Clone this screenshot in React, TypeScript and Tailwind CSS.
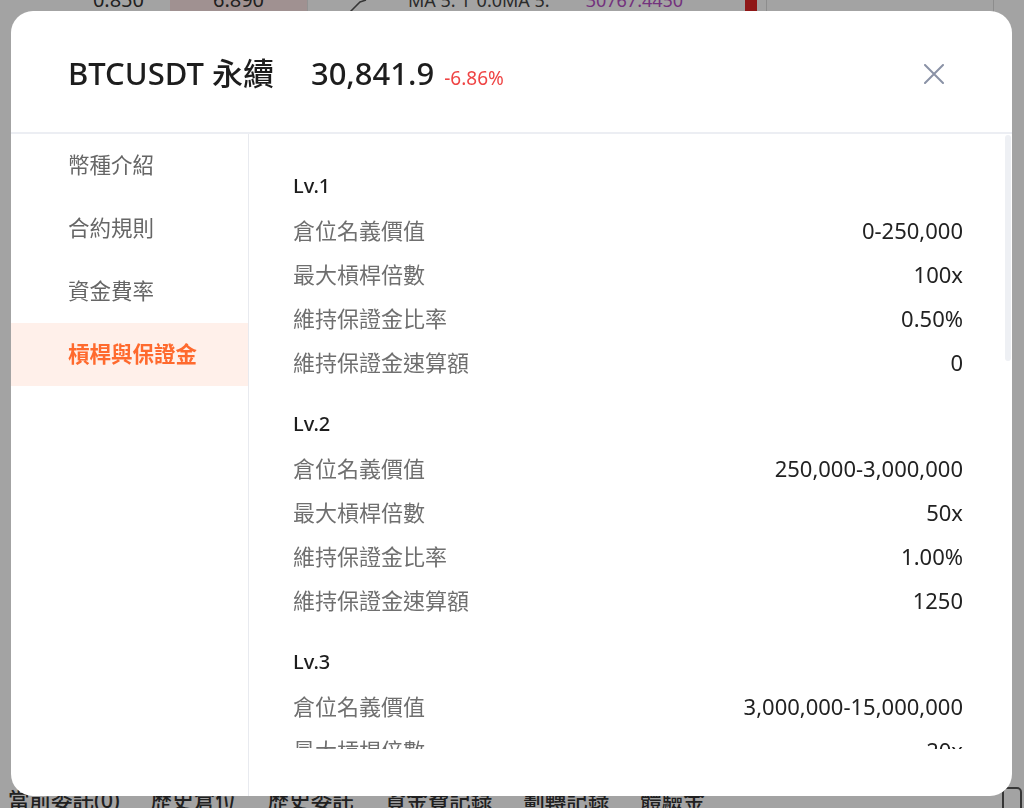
import React from "react";

const font = "font-['Noto_Sans','Noto_Sans_CJK_TC',sans-serif]";

const sections = [
  {
    lv: "Lv.1",
    rows: [
      ["倉位名義價值", "0-250,000"],
      ["最大槓桿倍數", "100x"],
      ["維持保證金比率", "0.50%"],
      ["維持保證金速算額", "0"],
    ],
  },
  {
    lv: "Lv.2",
    rows: [
      ["倉位名義價值", "250,000-3,000,000"],
      ["最大槓桿倍數", "50x"],
      ["維持保證金比率", "1.00%"],
      ["維持保證金速算額", "1250"],
    ],
  },
  {
    lv: "Lv.3",
    rows: [
      ["倉位名義價值", "3,000,000-15,000,000"],
      ["最大槓桿倍數", "20x"],
      ["維持保證金比率", "2.50%"],
      ["維持保證金速算額", "76250"],
    ],
  },
];

const menu = ["幣種介紹", "合約規則", "資金費率", "槓桿與保證金"];

export default function App() {
  return (
    <div className={`${font} relative h-[808px] w-full overflow-hidden bg-white`}>
      {/* background page */}
      <div className="flex h-[808px] flex-col justify-between">
        <div className="-mt-[14px] flex h-[28px] items-stretch text-[20px] text-[#333]">
          <div className="flex w-[170px] items-center justify-end pr-[26px]">0.850</div>
          <div className="flex w-[137px] items-center justify-center bg-[#fbe3e3]">6.890</div>
          <div className="w-[1px] bg-[#e5e5e5]" />
          <div className="flex w-[100px] items-center">
            <svg width="60" height="28" viewBox="0 0 60 28">
              <path d="M40 28 L52 16 L58 14" stroke="#555" strokeWidth="1.5" fill="none" />
            </svg>
          </div>
          <div className="flex items-center gap-[6px] text-[18px]">
            <span className="text-[#444]">MA 5: 1</span>
            <span className="text-[#444]">0.0MA 5:</span>
            <span className="ml-[30px] text-[#b54fc4]">30767.4450</span>
          </div>
          <div className="ml-[62px] w-[12px] bg-[#e02424]" />
          <div className="ml-[9px] w-[1px] bg-[#ddd]" />
          <div className="flex-1" />
          <div className="w-[1px] bg-[#ddd]" />
          <div className="w-[30px]" />
        </div>
        <div className="-mb-[8px] flex h-[32px] items-center gap-[31px] pl-[8px] text-[21.5px] font-medium text-[#333]">
          <span>當前委託(0)</span>
          <span>歷史倉位</span>
          <span>歷史委託</span>
          <span>資金費記錄</span>
          <span>劃轉記錄</span>
          <span>體驗金</span>
          <span className="ml-auto mr-[2px] h-[26px] w-[20px] rounded-[5px] border-2 border-[#555]" />
        </div>
      </div>

      {/* dim overlay */}
      <div className="fixed inset-0 bg-black/[0.36]" />

      {/* modal */}
      <div className="fixed left-[11px] top-[11px] flex h-[785px] w-[1001px] flex-col overflow-hidden rounded-[22px] bg-white">
        <div className="flex h-[123px] shrink-0 items-center border-b-2 border-[#eceef3] pl-[57px] pr-[66px] pt-[4px]">
          <div className="flex items-baseline">
            <span className="text-[31px] font-medium text-[#1d1d1d]">BTCUSDT 永續</span>
            <span className="ml-[37px] text-[31px] font-medium text-[#1d1d1d]">30,841.9</span>
            <span className="ml-[10px] text-[19px] text-[#ef4444]">-6.86%</span>
          </div>
          <button className="ml-auto flex h-[24px] w-[24px] items-center justify-center">
            <svg width="20" height="20" viewBox="0 0 20 20">
              <path d="M1 1 L19 19 M19 1 L1 19" stroke="#8a92a6" strokeWidth="2" strokeLinecap="round" />
            </svg>
          </button>
        </div>

        <div className="flex min-h-0 flex-1">
          <div className="w-[238px] shrink-0 border-r border-[#e8eaef]">
            {menu.map((m, i) => {
              const active = i === 3;
              return (
                <div
                  key={m}
                  className={`flex h-[63px] items-center pl-[57px] text-[21.5px] ${
                    active ? "bg-[#fff0ea] font-bold text-[#ff6a2e]" : "text-[#666]"
                  }`}
                >
                  {m}
                </div>
              );
            })}
          </div>

          <div className="flex min-w-0 flex-1 flex-col pb-[47px]">
            <div className="min-h-0 flex-1 overflow-hidden pl-[44px] pr-[42px] pt-[30px]">
              {sections.map((s) => (
                <div key={s.lv} className="mb-[18px]">
                  <div className="flex h-[44px] items-center text-[20px] font-medium text-[#1d1d1d]">{s.lv}</div>
                  {s.rows.map(([k, v]) => (
                    <div key={k} className="flex h-[44px] items-center justify-between text-[22px]">
                      <span className="text-[#6f6f6f]">{k}</span>
                      <span className="text-[#222]">{v}</span>
                    </div>
                  ))}
                </div>
              ))}
            </div>
          </div>

          <div className="w-[7px] shrink-0 pt-[1px]">
            <div className="h-[226px] w-[6px] rounded-full bg-[#eef0f4]" />
          </div>
        </div>
      </div>
    </div>
  );
}
